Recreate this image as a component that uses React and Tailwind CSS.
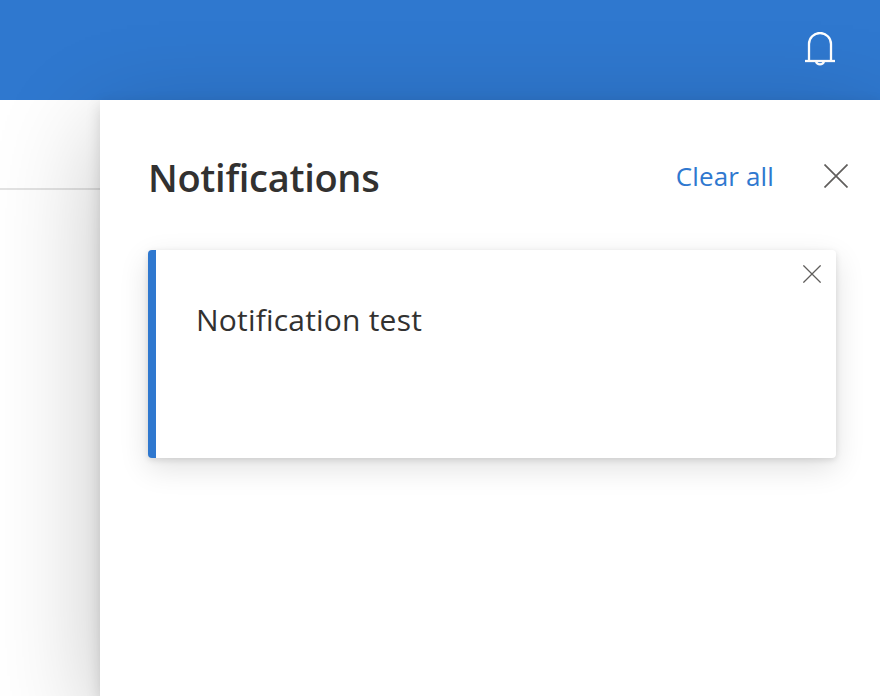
const font = "font-['Open_Sans','Noto_Sans',sans-serif]";

function CloseIcon({ className }) {
    return (
        <svg viewBox="0 0 24 24" fill="none" stroke="currentColor" strokeWidth="1.7" className={className}>
            <path d="M0.5 0.5 L23.5 23.5 M23.5 0.5 L0.5 23.5" />
        </svg>
    );
}

function BellIcon() {
    return (
        <svg width="30" height="36" viewBox="0 0 30 36" fill="none" stroke="white" strokeWidth="2.3">
            <path d="M4 29 V12 A11 11 0 0 1 26 12 V29" />
            <path d="M0 29 H30" />
            <path d="M11 29.5 A4.2 4.2 0 0 0 19 29.5" />
        </svg>
    );
}

export default function App() {
    return (
        <div className={`h-[696px] w-[880px] overflow-hidden bg-white flex flex-col ${font}`}>
            <header className="h-[100px] shrink-0 bg-[#2f78cf] flex items-center justify-end pr-[45px]">
                <BellIcon />
            </header>
            <div className="flex flex-1 min-h-0">
                <aside className="w-[100px] shrink-0 pt-[88px]">
                    <div className="h-[2px] bg-[#e3e3e3]" />
                </aside>
                <section className="relative flex-1 min-w-0 bg-white pl-[48px] pr-[44px] shadow-[0_30px_100px_rgba(0,0,0,0.24),0_5px_14px_rgba(0,0,0,0.14)]">
                    <div className="flex items-center h-[150px] pt-[2px]">
                        <h1 className="pt-[2px] text-[38px] leading-[48px] font-semibold text-[#323130] tracking-[-0.3px]">Notifications</h1>
                        <button className="ml-auto text-[26px] leading-[32px] text-[#2f78cf] tracking-[0.15px]">Clear all</button>
                        <CloseIcon className="ml-[50px] mr-[-12px] w-[24px] h-[24px] text-[#605e5c]" />
                    </div>
                    <div className="relative w-[688px] h-[208px] bg-white rounded-[4px] border-l-[8px] border-[#2f78cf] shadow-[0_10px_30px_rgba(0,0,0,0.12),0_2px_6px_rgba(0,0,0,0.12)] pl-[40px] pt-[50px]">
                        <p className="text-[30px] leading-[40px] text-[#323130] tracking-[0.2px]">Notification test</p>
                        <CloseIcon className="absolute top-[15px] right-[15px] w-[18px] h-[18px] text-[#605e5c]" />
                    </div>
                </section>
            </div>
        </div>
    );
}
